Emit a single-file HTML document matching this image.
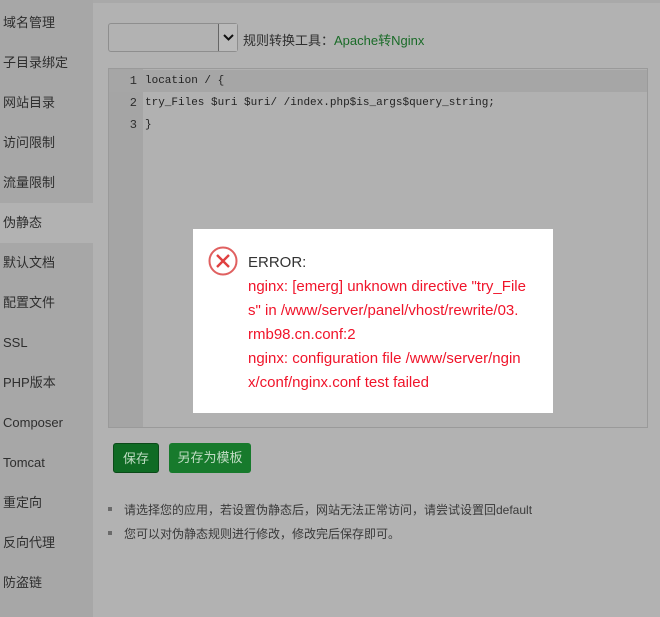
<!DOCTYPE html>
<html><head><meta charset="utf-8"><style>
*{margin:0;padding:0;box-sizing:border-box}
body{width:660px;height:617px;background:#b2b2b2;font-family:"Liberation Sans","Noto Sans CJK SC",sans-serif;position:relative;overflow:hidden;font-size:13px;color:#333}
.side{position:absolute;left:0;top:0;width:93px;height:617px;background:#a7a7a7;padding-top:3px}
.side div{height:40px;line-height:40px;padding-left:3px;color:#2e2e2e;font-size:13px}
.side .act{background:#b2b2b2}
.top{position:absolute;left:93px;top:0;right:0;height:3px;background:#a9a9a9}
.sel{position:absolute;left:108px;top:23px;width:130px;height:29px;border:1px solid #8e8e8e;border-radius:3px;background:#b2b2b2}
.sel i{position:absolute;right:0;top:0;width:19px;height:27px;border-left:1px solid #666;background:#bababa}
.lbl{position:absolute;left:243px;top:30px;color:#2e2e2e}
.lbl span{color:#1a6b28}
.ed{position:absolute;left:108px;top:68px;width:540px;height:360px;border:1px solid #9a9a9a;background:#b1b1b1}
.gut{position:absolute;left:0;top:0;width:34px;height:100%;background:#a5a5a5}
.ln{position:absolute;left:0;width:100%;height:22px;font-family:"Liberation Mono",monospace;font-size:11px;line-height:22px}
.ln b{font-weight:normal;position:absolute;left:0;width:28px;text-align:right;color:#2e2e2e;font-size:12px}
.ln span{position:absolute;left:36px;color:#222}
.k{color:#5a1a6a}.v{color:#2a4a7a}
.dlg{position:absolute;left:193px;top:229px;width:360px;height:184px;background:#fff}
.dlg .t{position:absolute;left:55px;top:22px;font-size:15px;line-height:24px;color:#333;white-space:nowrap}
.dlg .r{color:#f0142a}
.btn{position:absolute;top:443px;height:30px;line-height:30px;color:#c0dcc4;font-size:13px;border-radius:3px;text-align:center}
.ul{position:absolute;left:108px;top:498px;color:#3a3a3a;font-size:12px;line-height:24px}
.ul div:before{content:"";display:inline-block;width:4px;height:4px;background:#6a6a6a;margin:0 12px 3px 0}
</style></head><body>
<div class="side">
<div>域名管理</div><div>子目录绑定</div><div>网站目录</div><div>访问限制</div><div>流量限制</div><div class="act">伪静态</div><div>默认文档</div><div>配置文件</div><div>SSL</div><div>PHP版本</div><div>Composer</div><div>Tomcat</div><div>重定向</div><div>反向代理</div><div>防盗链</div>
</div>
<div class="top"></div>
<div class="sel"><i><svg width="19" height="27"><path d="M5 11l4.5 4.5L14 11" stroke="#111" stroke-width="2" fill="none"/></svg></i></div>
<div class="lbl">规则转换工具：<span>Apache转Nginx</span></div>
<div class="ed"><div class="gut"></div>
<div class="ln" style="top:1px;background:#a6a6a6"><b>1</b><span><span class="k" style="position:static">location</span> / {</span></div>
<div class="ln" style="top:23px"><b>2</b><span>try_Files <span class="v" style="position:static">$uri $uri</span>/ /<span class="k" style="position:static">index</span>.php<span class="v" style="position:static">$is_args$query_string</span>;</span></div>
<div class="ln" style="top:45px"><b>3</b><span>}</span></div>
</div>
<div class="dlg">
<svg style="position:absolute;left:15px;top:17px" width="30" height="30"><circle cx="15" cy="15" r="13.5" fill="none" stroke="#e06060" stroke-width="2"/><path d="M9 9l12 12M21 9L9 21" stroke="#e04040" stroke-width="2.4"/></svg>
<div class="t">ERROR:<div class="r">nginx: [emerg] unknown directive "try_File<br>s" in /www/server/panel/vhost/rewrite/03.<br>rmb98.cn.conf:2<br>nginx: configuration file /www/server/ngin<br>x/conf/nginx.conf test failed</div></div>
</div>
<div class="btn" style="left:113px;width:46px;background:#0f6b24;border:1px solid #0a4a18">保存</div>
<div class="btn" style="left:169px;width:82px;background:#177a2c">另存为模板</div>
<div class="ul"><div>请选择您的应用，若设置伪静态后，网站无法正常访问，请尝试设置回default</div><div>您可以对伪静态规则进行修改，修改完后保存即可。</div></div>
</body></html>
